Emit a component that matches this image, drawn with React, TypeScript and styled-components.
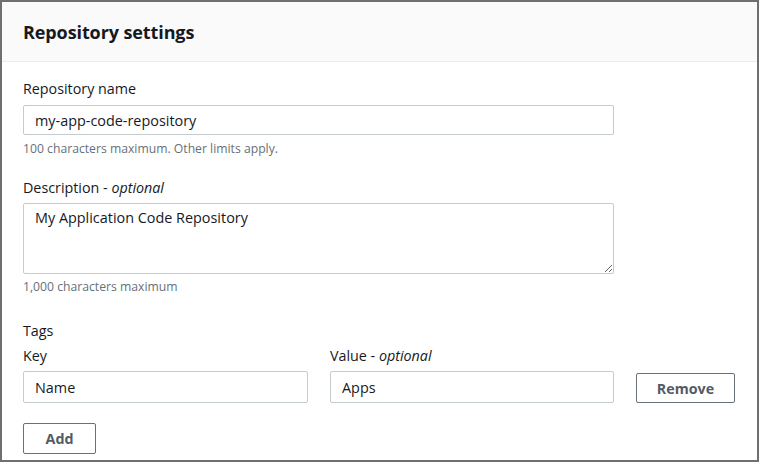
import React from "react";
import styled, { createGlobalStyle } from "styled-components";

const Global = createGlobalStyle`
  html, body { margin: 0; padding: 0; background: #ffffff; }
  body { font-family: "Open Sans", "Noto Sans", Arial, sans-serif; color: #16191f; }
  * { box-sizing: border-box; }
`;

const Panel = styled.div`
  width: 759px;
  height: 462px;
  border: 2px solid #6f6f6f;
  background: #ffffff;
  display: flex;
  flex-direction: column;
`;

const Header = styled.div`
  height: 60px;
  background: #fafafa;
  border-bottom: 1px solid #eaeded;
  display: flex;
  align-items: center;
  padding-left: 21px;
`;

const Title = styled.h2`
  margin: 0;
  font-size: 18px;
  font-weight: 700;
  letter-spacing: -0.1px;
  color: #16191f;
`;

const Body = styled.div`
  padding: 16px 21px 0 21px;
  display: flex;
  flex-direction: column;
`;

const Field = styled.div<{ $mt?: number }>`
  display: flex;
  flex-direction: column;
  margin-top: ${(p) => p.$mt ?? 0}px;
`;

const Label = styled.label<{ $mb?: number }>`
  font-size: 14.3px;
  line-height: 22px;
  color: #16191f;
  margin-bottom: ${(p) => p.$mb ?? 5}px;
  em { font-style: italic; }
`;

const SectionLabel = styled.div`
  font-size: 14.3px;
  line-height: 22px;
  color: #16191f;
  margin-bottom: 3px;
`;

const TextInput = styled.input<{ $w: number; $h?: number }>`
  width: ${(p) => p.$w}px;
  height: ${(p) => p.$h ?? 30}px;
  border: 1px solid #c5cccd;
  border-radius: 2px;
  padding: 0 11px;
  font-family: inherit;
  font-size: 14.4px;
  color: #16191f;
  background: #fff;
  outline: none;
`;

const TextArea = styled.textarea`
  width: 591px;
  height: 71px;
  margin-top: -1px;
  border: 1px solid #c5cccd;
  border-radius: 2px;
  padding: 3px 11px;
  font-family: inherit;
  font-size: 14.4px;
  line-height: 22px;
  color: #16191f;
  resize: vertical;
  outline: none;
`;

const Hint = styled.div<{ $mt?: number }>`
  font-size: 12.2px;
  line-height: 16px;
  color: #687078;
  margin-top: ${(p) => p.$mt ?? 5}px;
`;

const TagRow = styled.div`
  display: flex;
  align-items: flex-end;
  gap: 22px;
`;

const Button = styled.button<{ $w: number }>`
  width: ${(p) => p.$w}px;
  height: 31px;
  border: 1px solid #687078;
  border-radius: 2px;
  background: #ffffff;
  color: #545b64;
  font-family: inherit;
  font-size: 14.3px;
  font-weight: 700;
  padding: 0;
  cursor: pointer;
`;

const RemoveButton = styled(Button)`
  height: 30px;
`;

const AddWrap = styled.div`
  margin-top: 20px;
`;

export default function App() {
  return (
    <>
      <Global />
      <Panel>
        <Header>
          <Title>Repository settings</Title>
        </Header>
        <Body>
          <Field>
            <Label>Repository name</Label>
            <TextInput $w={591} defaultValue="my-app-code-repository" />
            <Hint $mt={6}>100 characters maximum. Other limits apply.</Hint>
          </Field>
          <Field $mt={20}>
            <Label>
              Description - <em>optional</em>
            </Label>
            <TextArea defaultValue="My Application Code Repository" />
            <Hint>1,000 characters maximum</Hint>
          </Field>
          <Field $mt={25}>
            <SectionLabel>Tags</SectionLabel>
            <TagRow>
              <Field>
                <Label $mb={4}>Key</Label>
                <TextInput $w={285} $h={32} defaultValue="Name" />
              </Field>
              <Field>
                <Label $mb={4}>
                  Value - <em>optional</em>
                </Label>
                <TextInput $w={284} $h={32} defaultValue="Apps" />
              </Field>
              <RemoveButton $w={99}>Remove</RemoveButton>
            </TagRow>
          </Field>
          <AddWrap>
            <Button $w={73}>Add</Button>
          </AddWrap>
        </Body>
      </Panel>
    </>
  );
}
